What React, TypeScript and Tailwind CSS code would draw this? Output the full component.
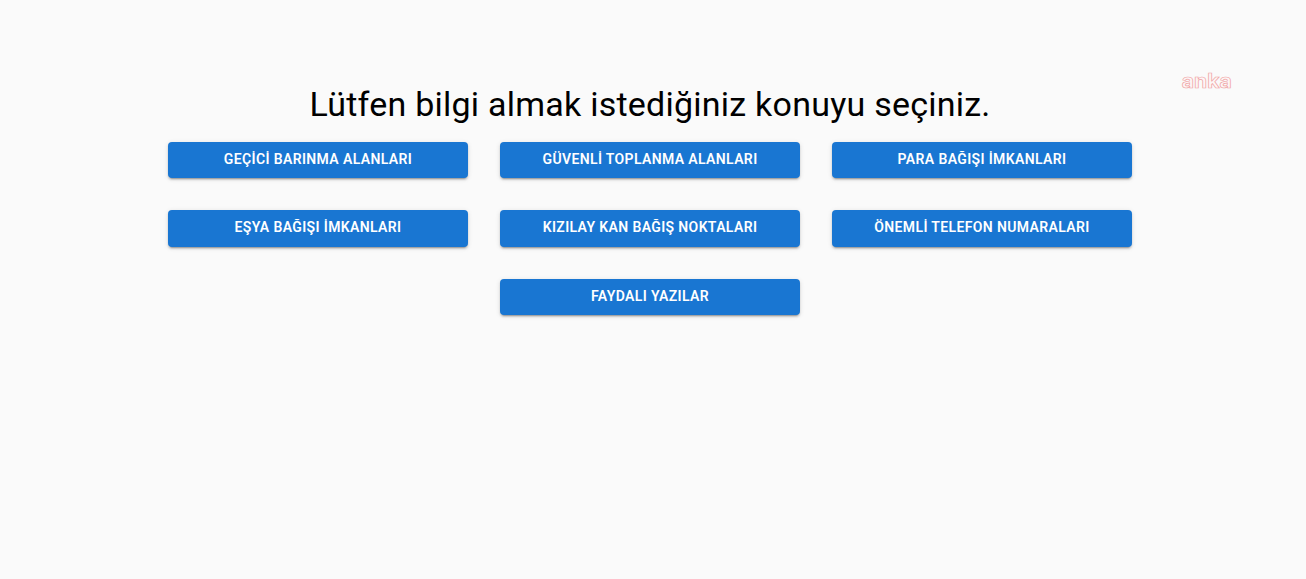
import React from "react";

const topics = [
  "Geçici Barınma Alanları",
  "Güvenli Toplanma Alanları",
  "Para Bağışı İmkanları",
  "Eşya Bağışı İmkanları",
  "Kızılay Kan Bağış Noktaları",
  "Önemli Telefon Numaraları",
  "Faydalı Yazılar",
];

const TopicButton: React.FC<{ label: string }> = ({ label }) => (
  <button className="flex h-[36.5px] w-[300px] items-center justify-center rounded bg-[#1976d2] px-4 pb-[2.5px] text-sm font-semibold tracking-[0.37px] text-white uppercase shadow-[0px_3px_1px_-2px_rgba(0,0,0,0.2),0px_2px_2px_0px_rgba(0,0,0,0.14),0px_1px_5px_0px_rgba(0,0,0,0.12)]">
    {label}
  </button>
);

const App: React.FC = () => {
  return (
    <main lang="tr" className="relative min-h-screen bg-[#fafafa] pt-[83px] pr-1.5 font-['Roboto',sans-serif]">
      <h1 className="text-center text-[34px] leading-[42px] font-normal tracking-[0.235px] text-black">
        Lütfen bilgi almak istediğiniz konuyu seçiniz.
      </h1>
      <div className="mx-auto mt-[16.75px] flex w-[964px] flex-wrap justify-center gap-8">
        {topics.map((topic) => (
          <TopicButton key={topic} label={topic} />
        ))}
      </div>

      {/* Agency watermark */}
      <svg className="absolute top-[66px] left-[1178px] h-[28px] w-[58px]" viewBox="0 0 58 28">
        <text
          x="3.8"
          y="22"
          textLength="50"
          lengthAdjust="spacingAndGlyphs"
          className="fill-[#fdf6f6] stroke-[#f0a4a4] stroke-[0.7px] font-['Inter',sans-serif] text-[20px] font-bold"
        >
          anka
        </text>
      </svg>
    </main>
  );
};

export default App;
